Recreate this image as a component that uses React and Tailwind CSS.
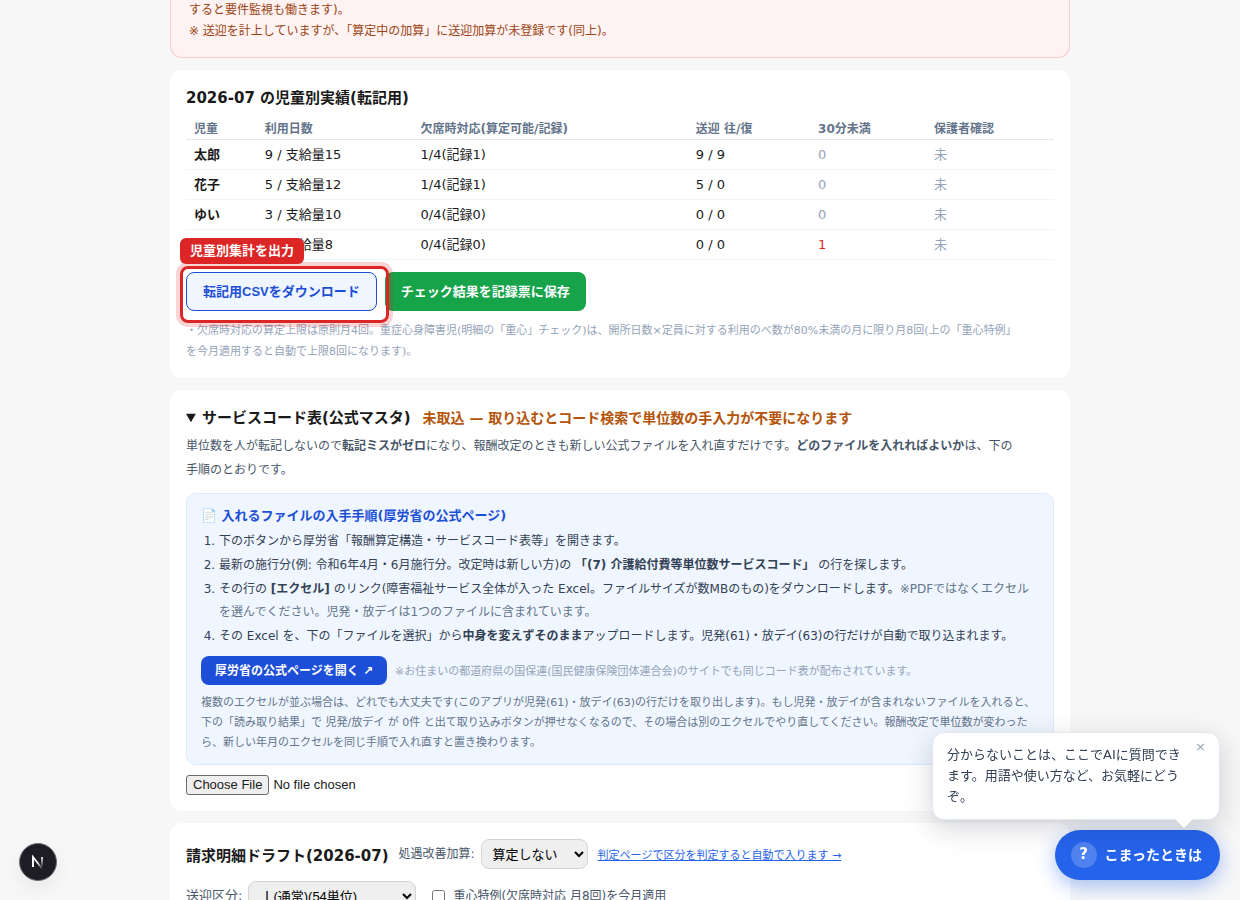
import { useState } from 'react'

const HEADERS = ['児童', '利用日数', '欠席時対応(算定可能/記録)', '送迎 往/復', '30分未満', '保護者確認']

const ROWS = [
  { name: '太郎', days: '9 / 支給量15', absence: '1/4(記録1)', pickup: '9 / 9', short: 0 },
  { name: '花子', days: '5 / 支給量12', absence: '1/4(記録1)', pickup: '5 / 0', short: 0 },
  { name: 'ゆい', days: '3 / 支給量10', absence: '0/4(記録0)', pickup: '0 / 0', short: 0 },
  { name: '', days: '1 / 支給量8', absence: '0/4(記録0)', pickup: '0 / 0', short: 1 },
]

function Card({ children }) {
  return <section className="bg-white rounded-xl p-4">{children}</section>
}

function AlertCard() {
  return (
    <div className="bg-[#fef2f2] border border-t-0 border-[#fecaca] rounded-b-xl px-[18px] pb-[15px] text-xs leading-[21px] text-[#9a4412]">
      <p>すると要件監視も働きます)。</p>
      <p>※ 送迎を計上していますが、「算定中の加算」に送迎加算が未登録です(同上)。</p>
    </div>
  )
}

function ResultsCard() {
  return (
    <Card>
      <h2 className="text-[15px] leading-6 font-bold">2026-07 の児童別実績(転記用)</h2>
      <table className="w-full mt-1.5 text-[13px]">
        <thead>
          <tr className="border-b border-[#e2e8f0] text-left text-xs text-[#64748b]">
            {HEADERS.map((h) => (
              <th key={h} className="px-2 pt-1 leading-[19px] font-bold">{h}</th>
            ))}
          </tr>
        </thead>
        <tbody>
          {ROWS.map((r, i) => (
            <tr key={i} className="h-[30px] border-b border-[#f1f5f9]">
              <td className="px-2 font-bold">{r.name}</td>
              <td className="px-2">{r.days}</td>
              <td className="px-2">{r.absence}</td>
              <td className="px-2">{r.pickup}</td>
              <td className={r.short > 0 ? 'px-2 text-[#dc2626]' : 'px-2 text-[#94a3b8]'}>{r.short}</td>
              <td className="px-2 text-[#94a3b8]">未</td>
            </tr>
          ))}
        </tbody>
      </table>

      <div className="flex gap-2 mt-3 font-['Liberation_Sans','Noto_Sans_CJK_JP',sans-serif] text-[13px] leading-5 font-bold">
        <div className="relative">
          <button type="button" className="h-[39px] px-4 rounded-lg border border-[#1d4ed8] bg-[#eff6ff] text-[#1d4ed8]">
            転記用CSVをダウンロード
          </button>
          {/* guide marker around the download button */}
          <div className="absolute -top-1.5 -left-1.5 -right-3 -bottom-3 z-10 rounded-lg border-3 border-[#dc2626] ring-4 ring-[#dc2626]/20 pointer-events-none" />
          <span className="absolute -top-[34px] -left-1.5 z-10 rounded-md bg-[#dc2626] px-2.5 py-[3px] text-white whitespace-nowrap">
            児童別集計を出力
          </span>
        </div>
        <button type="button" className="h-[39px] px-4 rounded-lg bg-[#16a34a] text-white">
          チェック結果を記録票に保存
        </button>
      </div>

      <p className="mt-[9px] text-[11px] leading-[21px] text-[#94a3b8]">
        ・欠席時対応の算定上限は原則月4回。重症心身障害児(明細の「重心」チェック)は、開所日数×定員に対する利用のべ数が80%未満の月に限り月8回(上の「重心特例」
        <br />
        を今月適用すると自動で上限8回になります)。
      </p>
    </Card>
  )
}

function ServiceCodeCard() {
  return (
    <Card>
      <details open>
        <summary className="text-[15px] leading-6 font-bold">
          サービスコード表(公式マスタ)
          <span className="ml-3 text-sm leading-6 text-[#b45309]">未取込 — 取り込むとコード検索で単位数の手入力が不要になります</span>
        </summary>
        <p className="mt-1 text-xs leading-6 text-[#475569]">
          単位数を人が転記しないので<b>転記ミスがゼロ</b>になり、報酬改定のときも新しい公式ファイルを入れ直すだけです。
          <b>どのファイルを入れればよいか</b>は、下の
          <br />
          手順のとおりです。
        </p>

        <div className="mt-[11px] rounded-[10px] border border-[#dbeafe] bg-[#eff6ff] px-3.5 pt-3 pb-[11px]">
          <h3 className="text-[13px] leading-5 font-bold text-[#1d4ed8]">📄 入れるファイルの入手手順(厚労省の公式ページ)</h3>
          <ol className="mt-1 pl-[18px] list-decimal space-y-px text-xs leading-[23px] text-[#334155]">
            <li>下のボタンから厚労省「報酬算定構造・サービスコード表等」を開きます。</li>
            <li>
              最新の施行分(例: 令和6年4月・6月施行分。改定時は新しい方)の <b>「(7) 介護給付費等単位数サービスコード」</b> の行を探します。
            </li>
            <li>
              その行の <b>[エクセル]</b> のリンク(障害福祉サービス全体が入った Excel。ファイルサイズが数MBのもの)をダウンロードします。
              <span className="text-[#64748b]">※PDFではなくエクセルを選んでください。児発・放デイは1つのファイルに含まれています。</span>
            </li>
            <li>
              その Excel を、下の「ファイルを選択」から<b>中身を変えずそのまま</b>アップロードします。児発(61)・放デイ(63)の行だけが自動で取り込まれます。
            </li>
          </ol>
          <div className="flex items-baseline gap-2 mt-2">
            <a href="#mhlw" className="rounded-lg bg-[#1d4ed8] px-3.5 pt-0.5 text-xs leading-[27px] font-bold text-white">
              厚労省の公式ページを開く ↗
            </a>
            <span className="text-[11px] text-[#94a3b8]">※お住まいの都道府県の国保連(国民健康保険団体連合会)のサイトでも同じコード表が配布されています。</span>
          </div>
          <p className="mt-2 text-[11px] leading-5 text-[#64748b]">
            複数のエクセルが並ぶ場合は、どれでも大丈夫です(このアプリが児発(61)・放デイ(63)の行だけを取り出します)。もし児発・放デイが含まれないファイルを入れると、下の「読み取り結果」で 児発/放デイ が 0件 と出て取り込みボタンが押せなくなるので、その場合は別のエクセルでやり直してください。報酬改定で単位数が変わったら、新しい年月のエクセルを同じ手順で入れ直すと置き換わります。
          </p>
        </div>

        <input
          type="file"
          aria-label="ファイルを選択"
          className="block mt-2.5 h-5 font-['Liberation_Sans',sans-serif] text-[13px] leading-4 file:h-5 file:rounded-[3px] file:border file:border-solid file:border-[#6b6b6b] file:bg-[#efefef] file:px-1.5"
        />
      </details>
    </Card>
  )
}

const selectClass =
  "h-[30px] rounded-lg border border-[#d1d5db] bg-[#efefef] px-[7px] font-['Liberation_Sans','Noto_Sans_CJK_JP',sans-serif] text-[13px] text-black"

function BillingCard() {
  const [special, setSpecial] = useState(false)

  return (
    <Card>
      <div className="flex items-center gap-2.5">
        <h2 className="pt-1 text-[15px] leading-6 font-bold">請求明細ドラフト(2026-07)</h2>
        <label className="flex items-center gap-1.5 text-xs text-[#475569]">
          処遇改善加算:
          <select className={`${selectClass} w-[107px]`}>
            <option>算定しない</option>
          </select>
        </label>
        <a href="#judge" className="pt-1 text-[11px] text-[#2563eb] underline">判定ページで区分を判定すると自動で入ります →</a>
      </div>
      <div className="flex items-center gap-4 mt-3">
        <label className="flex items-center gap-1.5 text-[13px] text-[#475569]">
          送迎区分:
          <select className={`${selectClass} w-[168px]`}>
            <option>Ⅰ(通常)(54単位)</option>
          </select>
        </label>
        <label className="flex items-center gap-2 text-xs text-[#475569]">
          <input type="checkbox" className="size-[13px]" checked={special} onChange={(e) => setSpecial(e.target.checked)} />
          重心特例(欠席時対応 月8回)を今月適用
        </label>
      </div>
    </Card>
  )
}

function HelpWidget() {
  const [open, setOpen] = useState(true)

  return (
    <div className="fixed right-5 bottom-5 flex flex-col items-end gap-2.5">
      {open && (
        <div className="relative z-10 w-72 rounded-xl border border-[#e2e8f0] bg-white pt-[11px] pb-3 pl-3.5 pr-9 text-[13px] leading-[21px] text-[#334155] shadow-[0_8px_28px_rgba(15,23,42,0.18)]">
          分からないことは、ここでAIに質問できます。用語や使い方など、お気軽にどうぞ。
          <button
            type="button"
            aria-label="閉じる"
            onClick={() => setOpen(false)}
            className="absolute top-1 right-[13px] text-[13px] leading-5 text-[#94a3b8]"
          >
            ×
          </button>
          <svg className="absolute top-full right-[26px]" width="18" height="9" viewBox="0 0 18 9" aria-hidden="true">
            <path d="M0 0h18L9 9z" fill="#fff" />
          </svg>
        </div>
      )}
      <button
        type="button"
        onClick={() => setOpen(true)}
        className="flex items-center gap-2 h-[50px] rounded-full bg-[#2563eb] pl-4 pr-[18px] text-sm font-bold text-white shadow-[0_6px_20px_rgba(37,99,235,0.4)]"
      >
        <span className="flex items-center justify-center size-[26px] rounded-full bg-white/20 text-[15px]">?</span>
        こまったときは
      </button>
    </div>
  )
}

function DevBadge() {
  return (
    <button
      type="button"
      aria-label="開発ツール"
      className="fixed left-[19px] bottom-[19px] size-[38px] rounded-full border border-[#6b6b78] bg-[#1f1d24] shadow-[0_8px_20px_rgba(0,0,0,0.06)]"
    >
      <svg className="mx-auto" width="18" height="18" viewBox="0 0 18 18" fill="none" aria-hidden="true">
        <defs>
          <linearGradient id="diag" x1="9" y1="9" x2="14" y2="16" gradientUnits="userSpaceOnUse">
            <stop stopColor="#fff" />
            <stop offset="1" stopColor="#fff" stopOpacity="0" />
          </linearGradient>
          <linearGradient id="stem" x1="13" y1="4" x2="13" y2="15" gradientUnits="userSpaceOnUse">
            <stop stopColor="#fff" />
            <stop offset="1" stopColor="#fff" stopOpacity="0" />
          </linearGradient>
        </defs>
        <path d="M4 14V4L13 15.500" stroke="url(#diag)" strokeWidth="1.700" />
        <path d="M4 14V4" stroke="#fff" strokeWidth="1.700" />
        <path d="M13 4V13" stroke="url(#stem)" strokeWidth="1.700" />
      </svg>
    </button>
  )
}

export default function App() {
  return (
    <div className="h-screen overflow-hidden bg-[#f7f7f7] font-['DejaVu_Sans','Noto_Sans_CJK_JP',sans-serif] text-[#1a1a1a]">
      <main className="mx-auto flex max-w-[900px] flex-col gap-3">
        <AlertCard />
        <ResultsCard />
        <ServiceCodeCard />
        <BillingCard />
      </main>
      <DevBadge />
      <HelpWidget />
    </div>
  )
}
